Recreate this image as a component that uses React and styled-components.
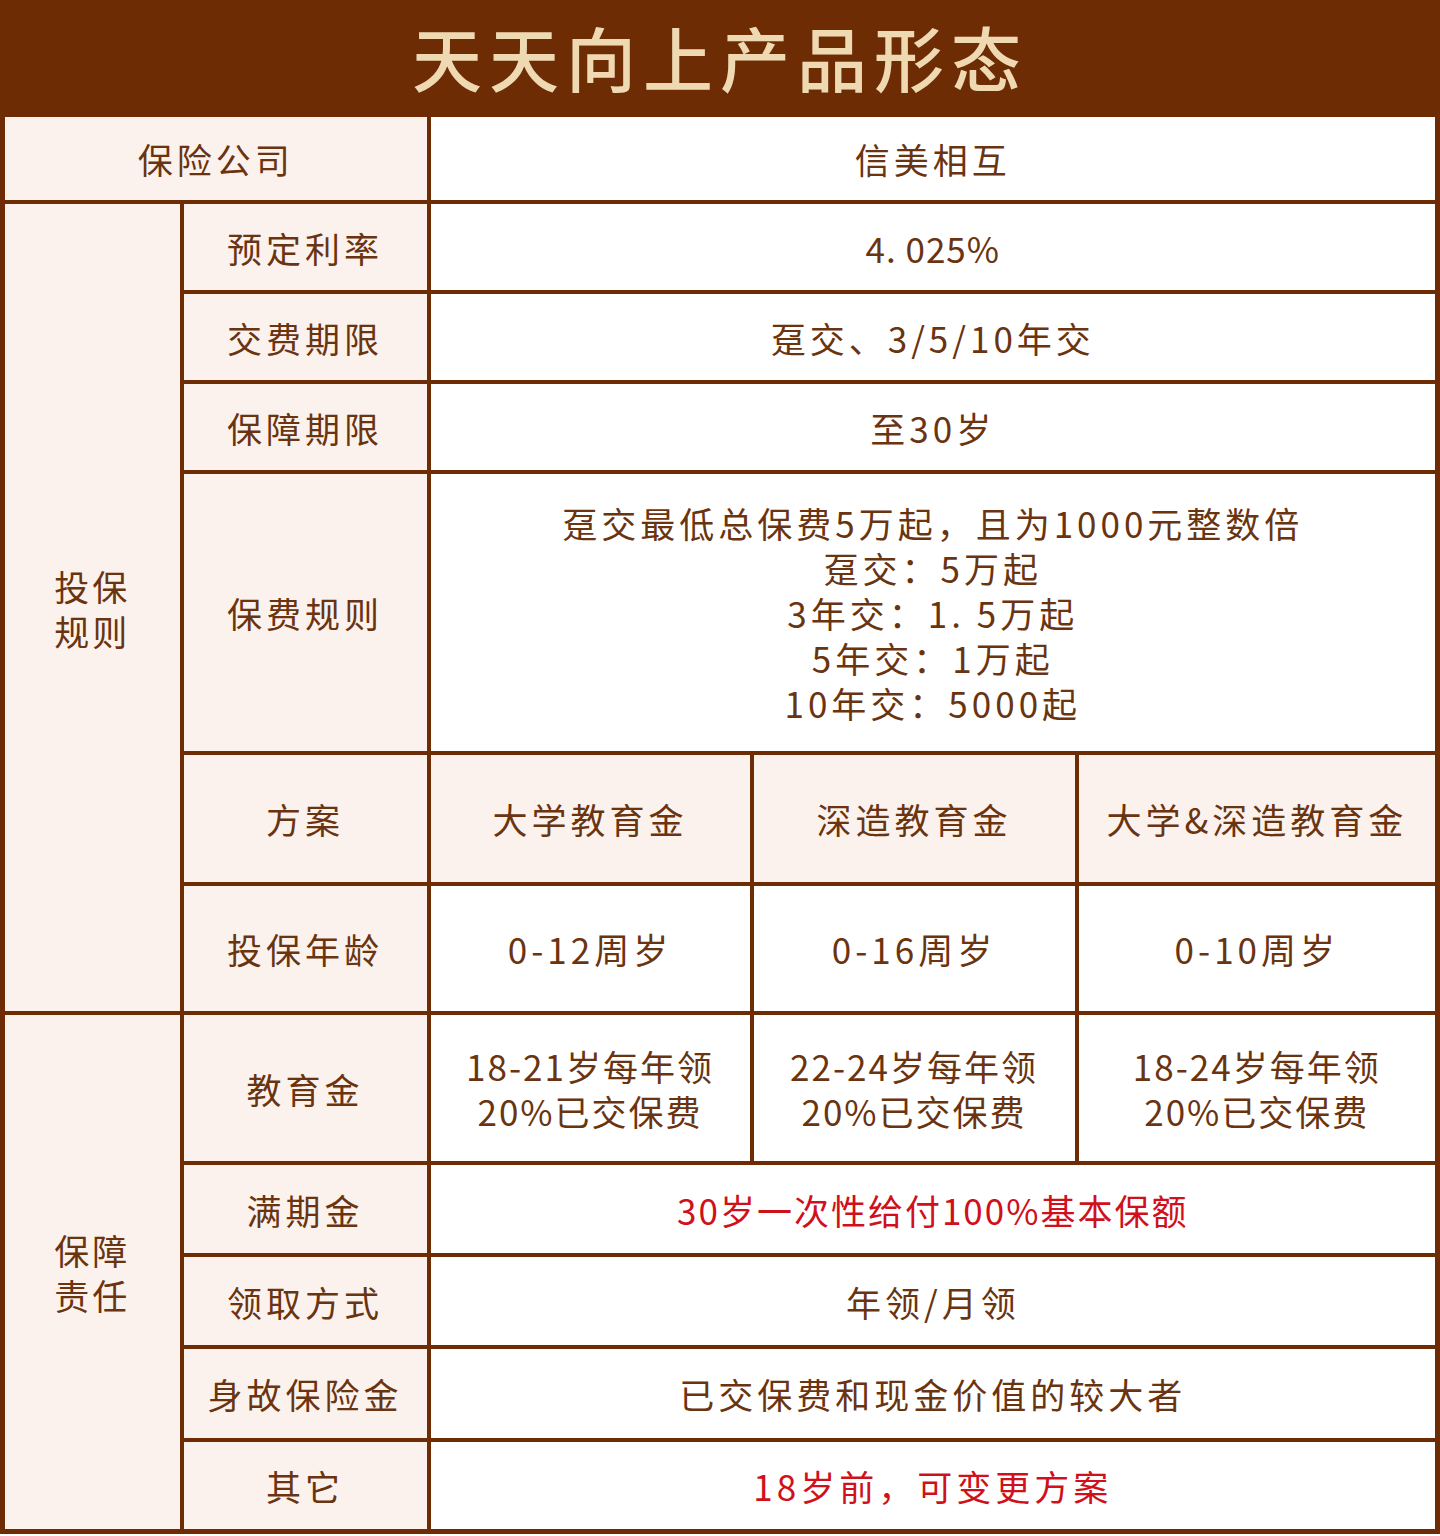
import React from 'react';
import styled, { createGlobalStyle } from 'styled-components';

const BROWN = '#6e2c04';
const INK = '#6a3410';
const RED = '#d0101b';
const PINK = '#fcf2ed';

const GlobalStyle = createGlobalStyle`
  html, body {
    margin: 0;
    padding: 0;
    background: #ffffff;
  }
  body {
    font-family: "Noto Sans CJK SC", "Noto Sans", sans-serif;
  }
`;

const Frame = styled.div`
  width: 1440px;
  overflow: hidden;
`;

const Table = styled.table`
  width: 1435px;
  table-layout: fixed;
  border-collapse: collapse;
  border: 5px solid ${BROWN};
  color: ${INK};
  font-size: 35px;
  letter-spacing: 4px;
`;

const TitleCell = styled.th`
  height: 104px;
  background: ${BROWN};
  color: #eed9b3;
  font-size: 70px;
  line-height: 1;
  font-weight: 500;
  letter-spacing: 7px;
  text-align: center;
  padding: 0 0 4px;
  border: 4px solid ${BROWN};
`;

const Row = styled.tr`
  height: ${(p) => p.$h}px;
`;

const Cell = styled.td`
  border: 4px solid ${BROWN};
  background: ${(p) => (p.$label ? PINK : '#ffffff')};
  color: ${(p) => (p.$red ? RED : INK)};
  text-align: center;
  vertical-align: middle;
  padding: 0;
  line-height: 45px;
  white-space: pre-line;
  letter-spacing: ${(p) => (p.$tight ? '2px' : 'inherit')};
`;

const GroupCell = styled(Cell)`
  letter-spacing: 3px;
`;

const Rate = styled.span`
  letter-spacing: 1px;
`;

const rows = [
  { label: '预定利率', h: 90, value: <Rate>4. 025%</Rate> },
  { label: '交费期限', h: 90, value: '趸交、3/5/10年交' },
  { label: '保障期限', h: 90, value: '至30岁' },
  {
    label: '保费规则',
    h: 281,
    value: '趸交最低总保费5万起，且为1000元整数倍\n趸交：5万起\n3年交：1. 5万起\n5年交：1万起\n10年交：5000起',
  },
];

const App = () => (
  <>
    <GlobalStyle />
    <Frame>
      <Table>
        <colgroup>
          <col style={{ width: 179 }} />
          <col style={{ width: 247 }} />
          <col style={{ width: 323 }} />
          <col style={{ width: 325 }} />
          <col style={{ width: 361 }} />
        </colgroup>
        <thead>
          <tr>
            <TitleCell colSpan={5}>天天向上产品形态</TitleCell>
          </tr>
        </thead>
        <tbody>
          <Row $h={87}>
            <Cell $label colSpan={2}>保险公司</Cell>
            <Cell colSpan={3}>信美相互</Cell>
          </Row>

          {rows.map((r, i) => (
            <Row key={r.label} $h={r.h}>
              {i === 0 && (
                <GroupCell $label rowSpan={6}>{'投保\n规则'}</GroupCell>
              )}
              <Cell $label>{r.label}</Cell>
              <Cell colSpan={3}>{r.value}</Cell>
            </Row>
          ))}

          <Row $h={131}>
            <Cell $label>方案</Cell>
            <Cell $label>大学教育金</Cell>
            <Cell $label>深造教育金</Cell>
            <Cell $label>大学&amp;深造教育金</Cell>
          </Row>
          <Row $h={129}>
            <Cell $label>投保年龄</Cell>
            <Cell>0-12周岁</Cell>
            <Cell>0-16周岁</Cell>
            <Cell>0-10周岁</Cell>
          </Row>

          <Row $h={150}>
            <GroupCell $label rowSpan={5}>{'保障\n责任'}</GroupCell>
            <Cell $label>教育金</Cell>
            <Cell $tight>{'18-21岁每年领\n20%已交保费'}</Cell>
            <Cell $tight>{'22-24岁每年领\n20%已交保费'}</Cell>
            <Cell $tight>{'18-24岁每年领\n20%已交保费'}</Cell>
          </Row>
          <Row $h={92}>
            <Cell $label>满期金</Cell>
            <Cell colSpan={3} $red $tight>30岁一次性给付100%基本保额</Cell>
          </Row>
          <Row $h={92}>
            <Cell $label>领取方式</Cell>
            <Cell colSpan={3}>年领/月领</Cell>
          </Row>
          <Row $h={93}>
            <Cell $label>身故保险金</Cell>
            <Cell colSpan={3}>已交保费和现金价值的较大者</Cell>
          </Row>
          <Row $h={91}>
            <Cell $label>其它</Cell>
            <Cell colSpan={3} $red>18岁前，可变更方案</Cell>
          </Row>
        </tbody>
      </Table>
    </Frame>
  </>
);

export default App;
